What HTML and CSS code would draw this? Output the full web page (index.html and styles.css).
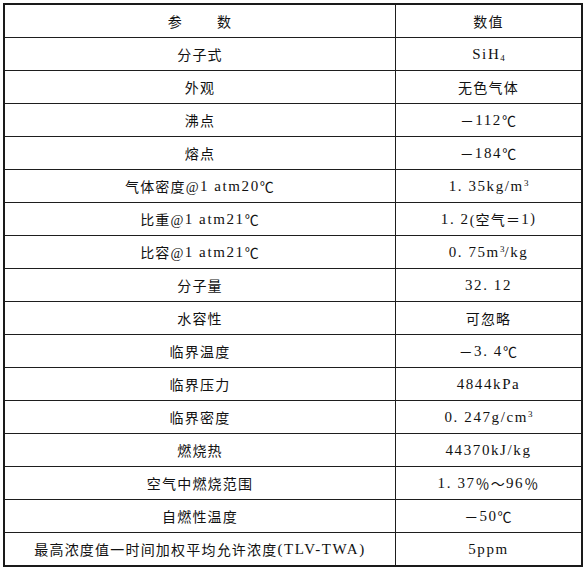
FILE: index.html
```html
<!DOCTYPE html>
<html lang="zh-CN">
<head>
<meta charset="utf-8">
<title>SiH4 参数</title>
<link rel="stylesheet" href="styles.css">
</head>
<body>
<div class="sheet">
  <div class="cell key head">参<span class="gap"></span>数</div>
  <div class="cell val head">数值</div>

  <div class="cell key">分子式</div>
  <div class="cell val"><span class="lat">SiH<sub>4</sub></span></div>

  <div class="cell key">外观</div>
  <div class="cell val">无色气体</div>

  <div class="cell key">沸点</div>
  <div class="cell val">－<span class="lat">112</span>℃</div>

  <div class="cell key">熔点</div>
  <div class="cell val">－<span class="lat">184</span>℃</div>

  <div class="cell key">气体密度@<span class="lat">1 atm20</span>℃</div>
  <div class="cell val"><span class="lat">1. 35kg/m<sup>3</sup></span></div>

  <div class="cell key">比重@<span class="lat">1 atm21</span>℃</div>
  <div class="cell val"><span class="lat">1. 2</span>(空气＝<span class="lat">1</span>)</div>

  <div class="cell key">比容@<span class="lat">1 atm21</span>℃</div>
  <div class="cell val"><span class="lat">0. 75m<sup>3</sup>/kg</span></div>

  <div class="cell key">分子量</div>
  <div class="cell val"><span class="lat">32. 12</span></div>

  <div class="cell key">水容性</div>
  <div class="cell val">可忽略</div>

  <div class="cell key">临界温度</div>
  <div class="cell val">－<span class="lat">3. 4</span>℃</div>

  <div class="cell key">临界压力</div>
  <div class="cell val"><span class="lat">4844kPa</span></div>

  <div class="cell key">临界密度</div>
  <div class="cell val"><span class="lat">0. 247g/cm<sup>3</sup></span></div>

  <div class="cell key">燃烧热</div>
  <div class="cell val"><span class="lat">44370kJ/kg</span></div>

  <div class="cell key">空气中燃烧范围</div>
  <div class="cell val"><span class="lat">1. 37</span>％～<span class="lat">96</span>％</div>

  <div class="cell key">自燃性温度</div>
  <div class="cell val">－<span class="lat">50</span>℃</div>

  <div class="cell key last">最高浓度值一时间加权平均允许浓度<span class="lat">(TLV-TWA)</span></div>
  <div class="cell val last"><span class="lat">5ppm</span></div>
</div>
</body>
</html>
```

FILE: styles.css
```css
html, body {
  margin: 0;
  padding: 0;
  background: #ffffff;
}

body {
  padding: 3px;
}

.sheet {
  width: 576px;
  border: 2px solid #1a1a1a;
  display: grid;
  grid-template-columns: 391px 1fr;
  font-family: "Liberation Serif", "Noto Sans CJK SC", serif;
  font-size: 14px;
  letter-spacing: 1.2px;
  color: #111111;
}

.cell {
  height: 32px;
  border-bottom: 1px solid #1e1e1e;
  display: flex;
  align-items: center;
  justify-content: center;
  white-space: nowrap;
}

.cell.last {
  border-bottom: none;
}

.key {
  border-right: 1px solid #1e1e1e;
}

.gap {
  display: inline-block;
  width: 34px;
}

.lat {
  font-size: 15px;
  letter-spacing: 1.6px;
}

sub, sup {
  font-size: 9px;
  letter-spacing: 0;
  line-height: 0;
}

sup {
  vertical-align: 5px;
}

sub {
  vertical-align: -2px;
}
```
